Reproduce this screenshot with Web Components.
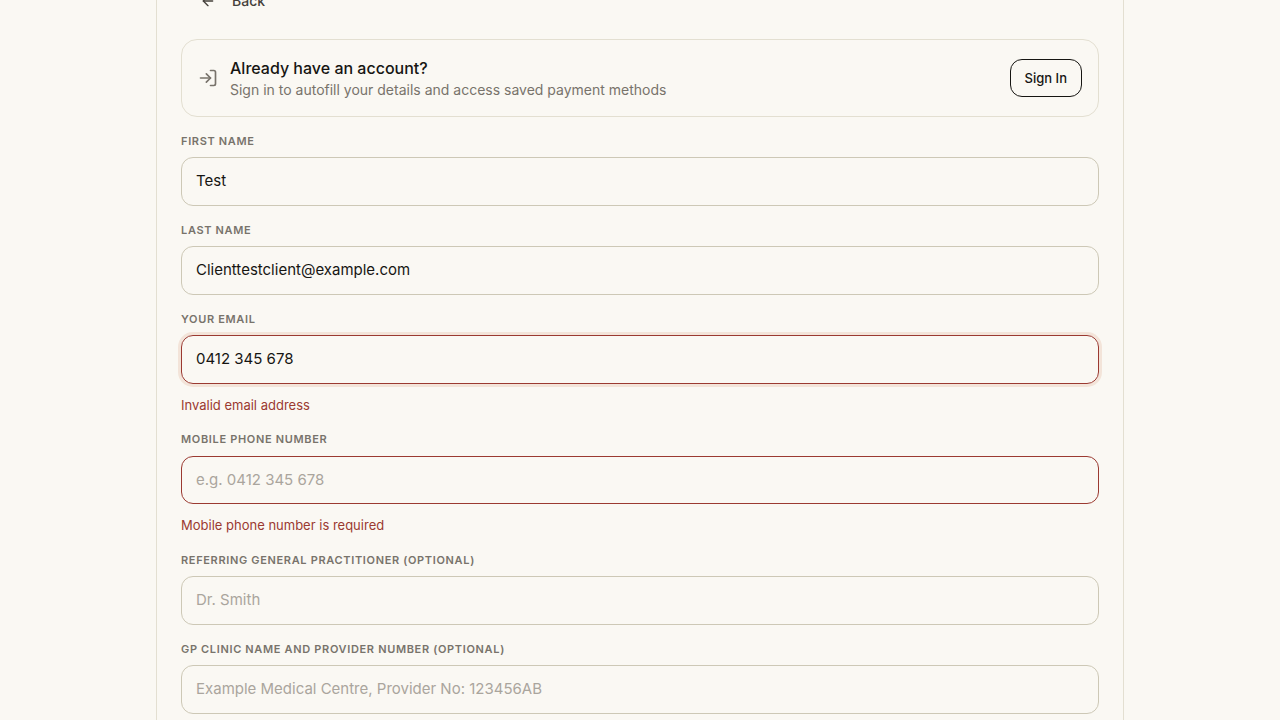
<!DOCTYPE html>
<html lang="en">
<head>
<meta charset="utf-8">
<meta name="viewport" content="width=device-width, initial-scale=1">
<title>Your details</title>
<style>
  :root {
    --bg: #faf8f3;
    --ink: #161512;
    --muted: #78736b;
    --faint: #aaa59d;
    --line: #e3dfd1;
    --field-line: #cdc8b6;
    --error: #9b3a31;
    --error-ring: #f3e4d9;
  }
  html { overflow: hidden; }
  body {
    margin: 0;
    background: var(--bg);
    color: var(--ink);
    font-family: Inter, "Liberation Sans", sans-serif;
    line-height: 1.5;
    -webkit-font-smoothing: antialiased;
  }
</style>
</head>
<body>
<checkout-panel>
  <back-button slot="nav">Back</back-button>
  <sign-in-card>
    <span slot="title">Already have an account?</span>
    <span slot="text">Sign in to autofill your details and access saved payment methods</span>
    <span slot="action">Sign In</span>
  </sign-in-card>
  <form-field label="First name" value="Test"></form-field>
  <form-field label="Last name" value="Clienttestclient@example.com"></form-field>
  <form-field label="Your email" value="0412 345 678" error="Invalid email address" active></form-field>
  <form-field label="Mobile phone number" placeholder="e.g. 0412 345 678" error="Mobile phone number is required"></form-field>
  <form-field label="Referring general practitioner (optional)" placeholder="Dr. Smith"></form-field>
  <form-field label="GP clinic name and provider number (optional)" placeholder="Example Medical Centre, Provider No: 123456AB"></form-field>
</checkout-panel>

<script>
class CheckoutPanel extends HTMLElement {
  constructor() {
    super();
    this.attachShadow({ mode: "open" }).innerHTML = `
      <style>
        :host {
          display: block;
          box-sizing: border-box;
          max-width: 968px;
          margin: -41px auto 0;
          padding: 24px;
          border: 1px solid var(--line);
          border-top: 0;
        }
        nav { display: flex; margin-bottom: 20px; }
        form { display: flex; flex-direction: column; gap: 16px; }
      </style>
      <nav><slot name="nav"></slot></nav>
      <form novalidate><slot></slot></form>`;
  }
}

class BackButton extends HTMLElement {
  constructor() {
    super();
    this.attachShadow({ mode: "open" }).innerHTML = `
      <style>
        :host { display: block; }
        button {
          display: flex; align-items: center; gap: 16px;
          padding: 9px 19px; border: 0;
          background: none; color: #45413b;
          font: 500 14px/1.25 Inter, sans-serif;
        }
        svg { width: 16px; height: 16px; }
      </style>
      <button type="button">
        <svg viewBox="0 0 24 24" fill="none" stroke="currentColor" stroke-width="2" stroke-linecap="round" stroke-linejoin="round" aria-hidden="true"><path d="m12 19-7-7 7-7"/><path d="M19 12H5"/></svg>
        <slot></slot>
      </button>`;
  }
}

class SignInCard extends HTMLElement {
  constructor() {
    super();
    this.attachShadow({ mode: "open" }).innerHTML = `
      <style>
        :host {
          display: flex; align-items: center; gap: 12px;
          padding: 16px;
          border: 1px solid var(--line); border-radius: 16px;
        }
        svg { width: 20px; height: 20px; flex: none; color: var(--muted); }
        .copy { flex: 1; min-width: 0; }
        h2 { margin: 0; font-size: 16px; line-height: 24px; font-weight: 500; }
        p { margin: 0; font-size: 14px; line-height: 20px; color: var(--muted); }
        button {
          height: 38px; padding: 0 14px;
          border: 1px solid var(--ink); border-radius: 12px;
          background: none; color: var(--ink);
          font: 500 13px/20px Inter, sans-serif;
        }
      </style>
      <svg viewBox="0 0 24 24" fill="none" stroke="currentColor" stroke-width="2" stroke-linecap="round" stroke-linejoin="round" aria-hidden="true"><path d="M15 3h4a2 2 0 0 1 2 2v14a2 2 0 0 1-2 2h-4"/><path d="m10 17 5-5-5-5"/><path d="M15 12H3"/></svg>
      <div class="copy">
        <h2><slot name="title"></slot></h2>
        <p><slot name="text"></slot></p>
      </div>
      <button type="button"><slot name="action"></slot></button>`;
  }
}

class FormField extends HTMLElement {
  constructor() {
    super();
    this.attachShadow({ mode: "open" }).innerHTML = `
      <style>
        :host { display: block; }
        label {
          display: block; margin-bottom: 8px;
          font-size: 11px; line-height: 1.5; font-weight: 600;
          letter-spacing: 0.06em; text-transform: uppercase;
          color: var(--muted);
        }
        input {
          display: block; box-sizing: border-box; width: 100%;
          padding: 12px 14px;
          border: 1px solid var(--field-line); border-radius: 12px;
          background: transparent; color: var(--ink); outline: none;
          font: 400 15px/1.5 Inter, sans-serif;
        }
        input::placeholder { color: var(--faint); opacity: 1; }
        :host([error]) input { border-color: var(--error); }
        :host([active]) input { box-shadow: 0 0 0 3px var(--error-ring); }
        p { margin: 12px 0 0; font-size: 13px; line-height: 1.5; color: var(--error); }
      </style>
      <label for="control"></label>
      <input id="control" type="text">
      <p id="message" hidden></p>`;
  }
  connectedCallback() {
    const root = this.shadowRoot;
    const input = root.querySelector("input");
    const message = root.querySelector("p");
    root.querySelector("label").textContent = this.getAttribute("label");
    input.value = this.getAttribute("value") || "";
    input.placeholder = this.getAttribute("placeholder") || "";
    if (this.hasAttribute("error")) {
      message.hidden = false;
      message.textContent = this.getAttribute("error");
      input.setAttribute("aria-invalid", "true");
      input.setAttribute("aria-describedby", "message");
    }
  }
}

customElements.define("checkout-panel", CheckoutPanel);
customElements.define("back-button", BackButton);
customElements.define("sign-in-card", SignInCard);
customElements.define("form-field", FormField);
</script>
</body>
</html>
